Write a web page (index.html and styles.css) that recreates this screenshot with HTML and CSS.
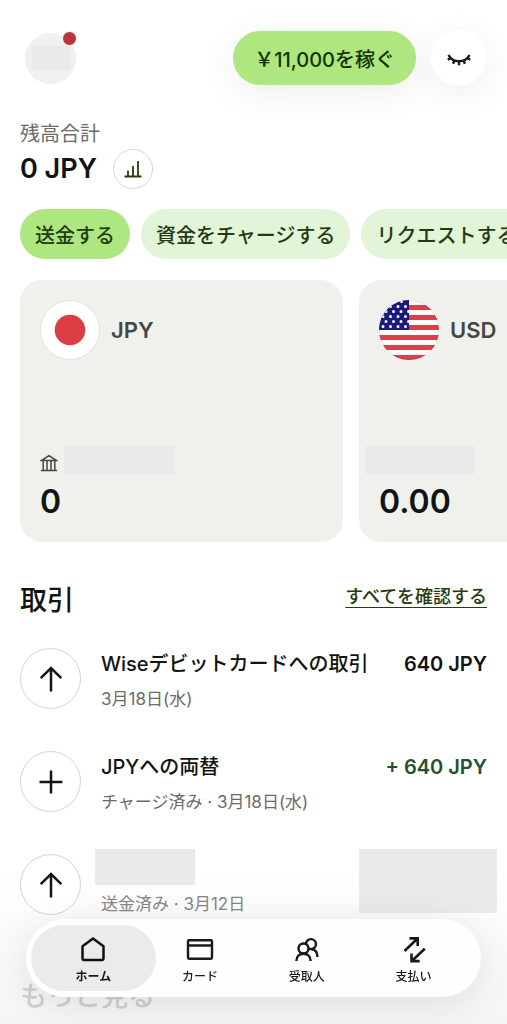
FILE: index.html
```html
<!DOCTYPE html>
<html lang="ja">
<head>
<meta charset="utf-8">
<meta name="viewport" content="width=device-width, initial-scale=1">
<title>ホーム</title>
<link rel="stylesheet" href="styles.css">
</head>
<body>
<div class="page">
  <header class="topbar">
    <button class="avatar" type="button" aria-label="プロフィール"><span class="avatar-name"></span><span class="avatar-dot"></span></button>
    <div class="topbar-actions">
      <button class="earn" type="button">￥11,000を稼ぐ</button>
      <button class="eye" type="button" aria-label="残高を隠す">
        <svg width="24" height="24" viewBox="0 0 24 24" fill="none" stroke="#181a17" stroke-width="2.500"><path d="M1.500 9C3.500 13 7.500 15.300 12 15.300S20.500 13 22.500 9M.8 13.800L3.900 11.800M23.200 13.800L20.100 11.800M6.100 17.700L7.500 14.200M17.900 17.700L16.500 14.200M12 19.300V15.300"/></svg>
      </button>
    </div>
  </header>

  <section class="balance">
    <p class="balance-label">残高合計</p>
    <div class="balance-row">
      <h1 class="balance-total">0 JPY</h1>
      <button class="chart" type="button" aria-label="分析">
        <svg width="18" height="18" viewBox="0 0 18 18" fill="none" stroke="#263a12" stroke-width="1.800"><path d="M.5 16.500h17M4 16V10.500M9 16V6M14 16V1"/></svg>
      </button>
    </div>
  </section>

  <div class="chips">
    <button class="chip chip-main" type="button">送金する</button>
    <button class="chip" type="button">資金をチャージする</button>
    <button class="chip" type="button">リクエストする</button>
  </div>

  <section class="cards">
    <article class="card">
      <div class="card-head">
        <svg class="flag" viewBox="0 0 60 60"><circle cx="30" cy="30" r="29.500" fill="#fff" stroke="#e2e3e0"/><circle cx="30" cy="30" r="15.300" fill="#dc3d43"/></svg>
        <h2 class="currency">JPY</h2>
      </div>
      <div class="account">
        <svg width="18" height="18" viewBox="0 0 18 18" fill="none" stroke="#454745" stroke-width="1.500"><path d="M1 16.500h16M3.200 7v9.500M7 7v9.500M11 7v9.500M14.800 7v9.500M1.500 6.500L9 1.700l7.500 4.800z"/></svg>
        <span class="mask"></span>
      </div>
      <p class="amount">0</p>
    </article>
    <article class="card">
      <div class="card-head">
        <svg class="flag" viewBox="0 0 60 60">
          <defs>
            <clipPath id="round"><circle cx="30" cy="30" r="30"/></clipPath>
            <clipPath id="canton"><path d="M0 0h30v30H0z"/></clipPath>
          </defs>
          <g clip-path="url(#round)">
            <path fill="#fff" d="M0 0h60v60H0z"/>
            <path stroke="#d9414a" stroke-width="5" d="M0 7.500h60M0 17.500h60M0 27.500h60M0 37.500h60M0 47.500h60M0 57.500h60"/>
            <path fill="#1b1a7c" d="M0 0h30v30H0z"/>
            <path clip-path="url(#canton)" stroke="#fff" stroke-width="3" stroke-linecap="round" stroke-dasharray="0 7.500" d="M22.500 1.500h6M-3.500 6.500h32M-.5 11.500h32M-3.500 16.500h32M-.5 21.500h32M-3.500 26.500h32"/>
          </g>
          <circle cx="30" cy="30" r="29.500" fill="none" stroke="#000" stroke-opacity=".1"/>
        </svg>
        <h2 class="currency">USD</h2>
      </div>
      <div class="account account-masked"><span class="mask"></span></div>
      <p class="amount">0.00</p>
    </article>
  </section>

  <section class="activity">
    <div class="activity-head">
      <h2 class="activity-title">取引</h2>
      <a class="see-all" href="#all">すべてを確認する</a>
    </div>
    <ul class="rows">
      <li class="row">
        <span class="row-icon"><svg width="26" height="26" viewBox="0 0 26 26" fill="none" stroke="#141613" stroke-width="2.500"><path d="M13 25.500V2M2.700 12.200L13 2l10.300 10.200"/></svg></span>
        <div class="row-text"><h3 class="row-title">Wiseデビットカードへの取引</h3><p class="row-sub">3月18日(水)</p></div>
        <p class="row-amount">640 JPY</p>
      </li>
      <li class="row">
        <span class="row-icon"><svg width="26" height="26" viewBox="0 0 26 26" fill="none" stroke="#141613" stroke-width="2.500"><path d="M13 1.500v23M1.500 13h23"/></svg></span>
        <div class="row-text"><h3 class="row-title">JPYへの両替</h3><p class="row-sub">チャージ済み · 3月18日(水)</p></div>
        <p class="row-amount row-amount-in">+ 640 JPY</p>
      </li>
      <li class="row">
        <span class="row-icon"><svg width="26" height="26" viewBox="0 0 26 26" fill="none" stroke="#141613" stroke-width="2.500"><path d="M13 25.500V2M2.700 12.200L13 2l10.300 10.200"/></svg></span>
        <div class="row-text"><div class="title-mask"></div><p class="row-sub row-sub-faded">送金済み · 3月12日</p></div>
        <div class="amount-mask"></div>
      </li>
    </ul>
    <p class="more">もっと見る</p>
  </section>
</div>

<nav class="tabs">
  <a class="tab tab-active" href="#home" aria-current="page">
    <svg class="tab-icon" viewBox="0 0 28 28" fill="none" stroke="#111" stroke-width="2.500" stroke-linejoin="round"><path d="M3.500 10.200L14 2.500l10.500 7.700v12.600q0 1.200-1.200 1.200H4.700q-1.200 0-1.200-1.200z"/></svg>
    <span>ホーム</span>
  </a>
  <a class="tab" href="#card">
    <svg class="tab-icon" viewBox="0 0 28 28" fill="none" stroke="#181a17" stroke-width="2.400" stroke-linejoin="round"><path d="M3.200 4.200h21.600q1.200 0 1.200 1.200v16.200q0 1.200-1.200 1.200H3.200Q2 22.800 2 21.600V5.400q0-1.200 1.200-1.200zM2 9.500h24"/></svg>
    <span>カード</span>
  </a>
  <a class="tab" href="#recipients">
    <svg class="tab-icon" viewBox="0 0 28 28" fill="none" stroke="#181a17" stroke-width="2.400"><circle cx="10.500" cy="12.500" r="5"/><path d="M3.400 25c0-4.600 2.900-7.300 7.100-7.300s7.100 2.700 7.100 7.300M13 8.300a5 5 0 1 1 5 4.800q-1.300 0-2.400-.6M18.500 13.300c3.500.3 5.900 3 5.900 7.700"/></svg>
    <span>受取人</span>
  </a>
  <a class="tab" href="#payments">
    <svg class="tab-icon" viewBox="0 0 28 28" fill="none" stroke="#181a17" stroke-width="2.600"><path d="M4.500 15L17.300 2.700M9.500 2.400h8.200V10M24.800 12.700L12 24.700M11.500 17.500v7.600h8.200"/></svg>
    <span>支払い</span>
  </a>
</nav>
</body>
</html>
```
FILE: styles.css
```css
* { box-sizing: border-box; }
body {
  margin: 0;
  min-height: 100vh;
  overflow-x: hidden;
  color: #121411;
  background: linear-gradient(to top, #f5f5f5 0, #ffffff 160px);
  font-family: Inter, "Noto Sans CJK JP", sans-serif;
}
h1, h2, h3, p, ul { margin: 0; padding: 0; }
ul { list-style: none; }
button { border: 0; padding: 0; font: inherit; color: inherit; cursor: pointer; }
a { color: inherit; }
svg { display: block; flex: none; }

.page { padding: 30px 20px 0; overflow: hidden; }

.topbar { display: flex; justify-content: space-between; align-items: center; padding-left: 5px; }
.avatar { position: relative; display: grid; place-items: center; width: 51px; height: 51px; border-radius: 50%; background: #f0f1ee; }
.avatar-name { width: 38px; height: 24px; background: #eaeaea; }
.avatar-dot { position: absolute; top: -2px; right: -1px; width: 15px; height: 15px; border: 1px solid #ffffff; border-radius: 50%; background: #b93638; }
.topbar-actions { display: flex; align-items: center; gap: 15px; }
.earn { height: 54px; padding: 0 21px; border-radius: 27px; background: #aee67f; color: #163300; font-size: 20px; font-weight: 500; box-shadow: 0 8px 36px rgba(0, 0, 0, 0.07); }
.eye { display: grid; place-items: center; width: 56px; height: 56px; border-radius: 50%; background: #ffffff; box-shadow: 0 8px 36px rgba(0, 0, 0, 0.07); }

.balance { padding-top: 34px; }
.balance-label { color: #6a6c69; font-size: 20px; line-height: 29px; font-weight: 400; }
.balance-row { display: flex; align-items: center; gap: 16px; }
.balance-total { font-size: 27px; line-height: 40px; font-weight: 600; }
.chart { display: grid; place-items: center; width: 40px; height: 40px; border: 1px solid #d6d8d3; border-radius: 50%; background: #ffffff; }

.chips { display: flex; gap: 11px; margin: 20px -20px 0 0; overflow: hidden; }
.chip { flex: none; height: 50px; padding: 0 15px; border-radius: 25px; background: #e3f5d8; color: #263a12; font-size: 20px; font-weight: 500; }
.chip-main { background: #aee67f; }

.cards { display: flex; gap: 16px; margin: 21px -20px 0 0; overflow: hidden; }
.card { display: flex; flex-direction: column; flex: 0 0 323px; padding: 20px 20px 18px; border-radius: 22px; background: #f0f1ed; }
.card-head { display: flex; align-items: center; gap: 11px; }
.flag { width: 60px; height: 60px; }
.currency { color: #454745; font-size: 22px; line-height: 30px; font-weight: 600; }
.account { display: flex; align-items: flex-end; gap: 6px; margin-top: 86px; }
.account svg { margin-bottom: 2px; }
.account-masked { margin-left: -14px; }
.mask { width: 110px; height: 28px; background: #eaeaea; }
.amount { margin-top: 6px; font-size: 32px; line-height: 44px; font-weight: 600; }

.activity { padding-top: 38px; }
.activity-head { display: flex; justify-content: space-between; align-items: flex-start; }
.activity-title { font-size: 27px; line-height: 42px; font-weight: 500; }
.see-all { color: #263a12; font-size: 18px; line-height: 34px; font-weight: 500; text-underline-offset: 4px; text-decoration-thickness: 1px; }
.rows { display: grid; gap: 42px; padding-top: 26px; }
.row { display: flex; height: 61px; gap: 20px; }
.row-icon { display: grid; place-items: center; flex: none; width: 61px; height: 61px; border: 1px solid #d3d4d1; border-radius: 50%; background: #ffffff; }
.row-text { flex: 1; min-width: 0; }
.row-title { font-size: 20px; line-height: 32px; font-weight: 500; white-space: nowrap; }
.row-sub { margin-top: 6px; color: #6a6c69; font-size: 17px; line-height: 26px; font-weight: 400; }
.row-sub-faded { color: #858684; }
.row-amount { font-size: 20px; line-height: 32px; font-weight: 600; white-space: nowrap; }
.row-amount-in { color: #24512f; }
.title-mask { width: 100px; height: 36px; margin: -5px 0 0 -6px; background: #eaeaea; }
.amount-mask { width: 138px; height: 64px; margin: -5px -10px 0 0; background: #eaeaea; }
.more { padding-top: 62px; color: #d0d0d0; font-size: 27px; line-height: 40px; font-weight: 500; }

.tabs {
  position: fixed; left: 26px; right: 26px; bottom: 27px;
  display: grid; grid-template-columns: repeat(4, 1fr);
  padding: 6px 14px;
  border-radius: 39px;
  background: #fefefe;
  box-shadow: 0 6px 36px rgba(0, 0, 0, 0.1);
}
.tab { position: relative; display: flex; flex-direction: column; align-items: center; height: 66px; padding-top: 11px; gap: 4px; color: #181a17; font-size: 12px; line-height: 18px; font-weight: 500; text-decoration: none; }
.tab-icon { width: 28px; height: 28px; }
.tab-active { font-weight: 700; }
.tab-active::before { content: ""; position: absolute; inset: 0 -9px; border-radius: 33px; background: #ebebeb; }
.tab-active > * { position: relative; }
```
